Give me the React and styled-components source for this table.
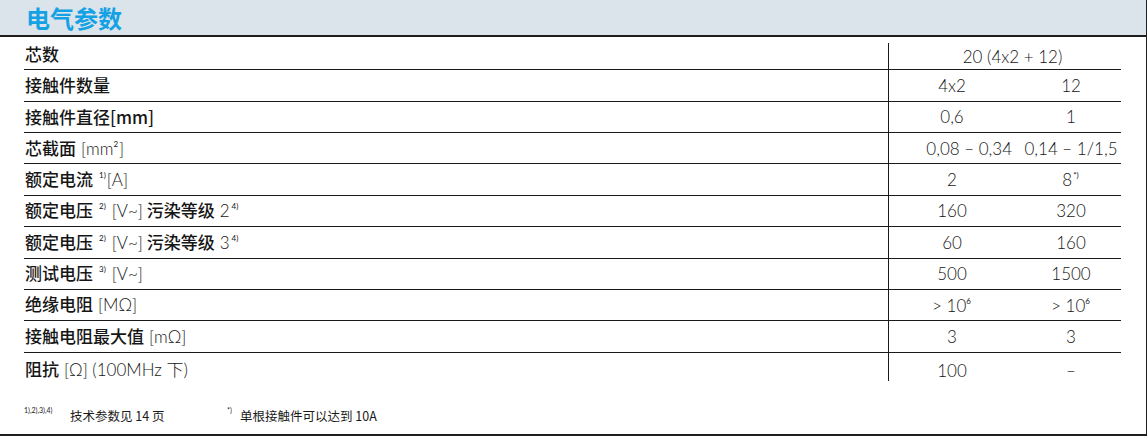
import React from "react";
import styled, { createGlobalStyle } from "styled-components";

const GlobalStyle = createGlobalStyle`
  html, body {
    margin: 0;
    padding: 0;
    background: #ffffff;
  }
  body {
    font-family: "Noto Sans CJK SC", "Noto Sans", sans-serif;
    color: #1a1a1a;
  }
`;

const Sheet = styled.div`
  width: 1147px;
  height: 436px;
  box-sizing: border-box;
  border-right: 1px solid #1e1e1e;
  border-bottom: 2px solid #1e1e1e;
  background: #ffffff;
  display: flex;
  flex-direction: column;
`;

const Header = styled.header`
  height: 35px;
  flex: none;
  background: #dbe4ea;
  border-bottom: 2px solid #1e1e1e;
  display: flex;
  align-items: center;
  padding-left: 26px;
`;

const Title = styled.h1`
  margin: 0;
  font-family: "Noto Sans CJK SC", sans-serif;
  font-size: 24px;
  font-weight: 700;
  color: #14a2e4;
  line-height: 1;
`;

const Table = styled.div`
  margin: 2px 0 0 24px;
  width: 1097px;
  display: flex;
  flex-direction: column;
`;

const Row = styled.div`
  display: grid;
  grid-template-columns: 864px 233px;
  height: 31.37px;
  box-sizing: border-box;
  border-bottom: ${(p) => (p.$last ? "none" : "1px solid #1a1a1a")};
`;

const Label = styled.div`
  display: flex;
  align-items: center;
  padding-left: 1px;
  font-family: "Noto Sans CJK SC", sans-serif;
  font-size: 17px;
  font-weight: 500;
  white-space: nowrap;
  color: #161616;
`;

const LabelText = styled.span`
  line-height: 1.2;
`;

const Unit = styled.span`
  font-family: "Lato", "Noto Sans CJK SC", sans-serif;
  font-weight: 300;
  font-size: 17px;
  margin-left: ${(p) => (p.$gap ? "5px" : "0")};
`;

const Sup = styled.sup`
  font-family: "Lato", "Noto Sans", sans-serif;
  font-weight: 400;
  font-size: 8px;
  line-height: 0;
  vertical-align: 8px;
  margin: 0 1px 0 ${(p) => p.$space || "0"};
`;

const ValueCell = styled.div`
  border-left: 1px solid #1a1a1a;
  display: grid;
  grid-template-columns: 126px 1fr;
  align-items: center;
  margin-top: ${(p) => (p.$first ? "4px" : "0")};
  margin-bottom: ${(p) => (p.$last ? "7px" : "0")};
  padding-top: ${(p) => (p.$last ? "7px" : "0")};
  font-family: "Lato", "Open Sans", sans-serif;
  font-weight: 300;
  font-size: 17px;
  color: #161616;
  white-space: nowrap;
`;

const Value = styled.span`
  text-align: ${(p) => (p.$end ? "right" : "center")};
  padding-right: ${(p) => (p.$end ? "3px" : "0")};
`;

const SecondValue = styled.span`
  text-align: center;
  padding-left: 6px;
`;

const SpanValue = styled.span`
  grid-column: 1 / -1;
  text-align: center;
  padding-left: 15px;
`;

const Footer = styled.footer`
  margin-top: 22px;
  padding-left: 24px;
  display: flex;
  align-items: center;
  font-family: "Noto Sans CJK SC", sans-serif;
  font-size: 12.5px;
  color: #1a1a1a;
  white-space: nowrap;
`;

const Note = styled.div`
  display: flex;
  align-items: baseline;
  width: ${(p) => p.$width || "auto"};
`;

const NoteMark = styled.span`
  font-family: "Lato", sans-serif;
  font-size: 7px;
  align-self: flex-start;
  width: ${(p) => p.$width};
  flex: none;
`;

const rows = [
  { label: <>芯数</>, span: "20 (4x2 + 12)" },
  { label: <>接触件数量</>, values: ["4x2", "12"] },
  { label: <>接触件直径[mm]</>, values: ["0,6", "1"] },
  {
    label: (
      <>
        芯截面
        <Unit $gap>
          [mm<Sup>2</Sup>]
        </Unit>
      </>
    ),
    values: ["0,08 – 0,34", "0,14 – 1/1,5"],
    end: true,
  },
  {
    label: (
      <>
        额定电流<Sup $space="6px">1)</Sup>
        <Unit>[A]</Unit>
      </>
    ),
    values: [
      "2",
      <>
        8<Sup $space="1px">*)</Sup>
      </>,
    ],
  },
  {
    label: (
      <>
        额定电压<Sup $space="6px">2)</Sup>
        <Unit $gap>[V~]</Unit>&nbsp;污染等级<Unit $gap>2</Unit>
        <Sup $space="2px">4)</Sup>
      </>
    ),
    values: ["160", "320"],
  },
  {
    label: (
      <>
        额定电压<Sup $space="6px">2)</Sup>
        <Unit $gap>[V~]</Unit>&nbsp;污染等级<Unit $gap>3</Unit>
        <Sup $space="2px">4)</Sup>
      </>
    ),
    values: ["60", "160"],
  },
  {
    label: (
      <>
        测试电压<Sup $space="6px">3)</Sup>
        <Unit $gap>[V~]</Unit>
      </>
    ),
    values: ["500", "1500"],
  },
  {
    label: (
      <>
        绝缘电阻<Unit $gap>[MΩ]</Unit>
      </>
    ),
    values: [
      <>
        &gt; 10<Sup>6</Sup>
      </>,
      <>
        &gt; 10<Sup>6</Sup>
      </>,
    ],
  },
  {
    label: (
      <>
        接触电阻最大值<Unit $gap>[mΩ]</Unit>
      </>
    ),
    values: ["3", "3"],
  },
  {
    label: (
      <>
        阻抗<Unit $gap>[Ω] (100MHz 下)</Unit>
      </>
    ),
    values: ["100", "–"],
  },
];

export default function App() {
  return (
    <>
      <GlobalStyle />
      <Sheet>
        <Header>
          <Title>电气参数</Title>
        </Header>
        <Table>
          {rows.map((row, i) => {
            const first = i === 0;
            const last = i === rows.length - 1;
            return (
              <Row key={i} $last={last}>
                <Label>
                  <LabelText>{row.label}</LabelText>
                </Label>
                <ValueCell $first={first} $last={last}>
                  {row.span ? (
                    <SpanValue>{row.span}</SpanValue>
                  ) : (
                    <>
                      <Value $end={row.end}>{row.values[0]}</Value>
                      <SecondValue>{row.values[1]}</SecondValue>
                    </>
                  )}
                </ValueCell>
              </Row>
            );
          })}
        </Table>
        <Footer>
          <Note $width="203px">
            <NoteMark $width="46px">1),2),3),4)</NoteMark>
            技术参数见 14 页
          </Note>
          <Note>
            <NoteMark $width="13px">*)</NoteMark>
            单根接触件可以达到 10A
          </Note>
        </Footer>
      </Sheet>
    </>
  );
}
